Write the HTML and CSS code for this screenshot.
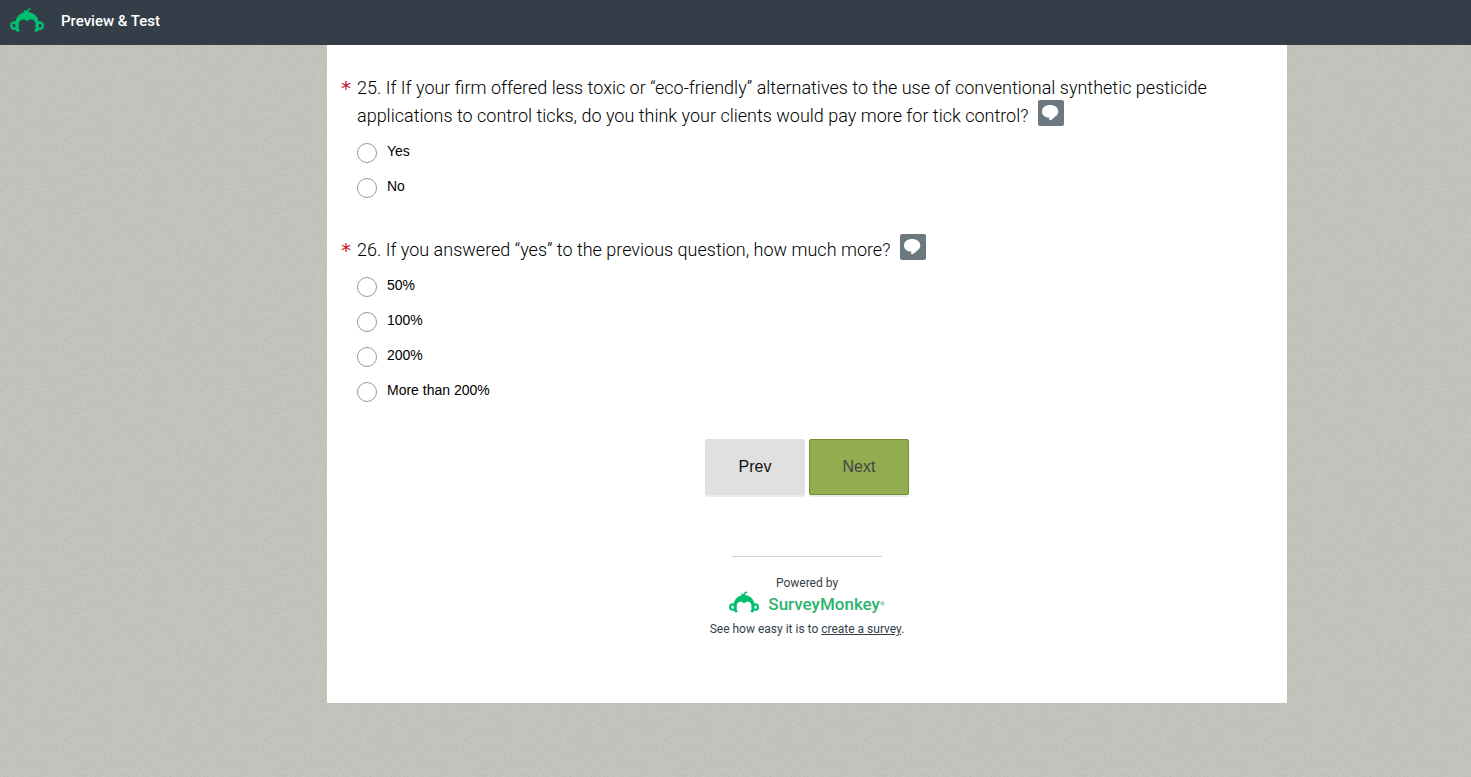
FILE: index.html
```html
<!DOCTYPE html>
<html lang="en">
<head>
  <meta charset="UTF-8">
  <meta name="viewport" content="width=device-width, initial-scale=1.0">
  <title>Preview &amp; Test</title>
  <link rel="stylesheet" href="styles.css">
</head>
<body>
  <svg class="symbols" aria-hidden="true">
    <symbol id="monkey" viewBox="0 0 34 24">
      <circle cx="4.4" cy="17.7" r="3.1" fill="none" stroke="#00bf6f" stroke-width="2.5"/>
      <circle cx="29.8" cy="17.7" r="3.1" fill="none" stroke="#00bf6f" stroke-width="2.5"/>
      <path fill="#00bf6f" d="M5.2 15 C6 8.4 10.8 4 17.1 4 S28.2 8.4 29 15 L28.6 21.4 C28.4 22.8 27.6 23.8 26.4 23.8 L24.2 23 C25.4 21.4 26 19.4 25.8 17.2 C25.5 13.6 23.6 11.6 21.3 11.6 C19.4 11.6 18 12.2 17.1 13.6 C16.2 12.2 14.8 11.6 12.9 11.6 C10.6 11.6 8.7 13.6 8.4 17.2 C8.2 19.4 8.8 21.4 10 23 L7.8 23.8 C6.6 23.8 5.8 22.8 5.6 21.4 Z"/>
      <path fill="none" stroke="#00bf6f" stroke-width="1.6" stroke-linecap="round" d="M16.9 5 C17 3 18 1.4 19.8 .9 M16.6 5 C16.2 3.8 15.4 3.2 14.4 3.1"/>
    </symbol>
    <symbol id="bubble" viewBox="0 0 26 26">
      <path fill="#fff" d="M12 5 C16.8 5 20.3 7.6 20.3 11.4 C20.3 13.6 19 15.6 17 16.8 C15.6 18.4 14.2 19.6 12.4 20.2 C11.4 20.5 11 20 11.2 19.2 L11.4 17.6 C7 17.4 4 15 4 11.4 C4 7.6 7.4 5 12 5 Z"/>
    </symbol>
  </svg>

  <header class="topbar">
    <svg class="topbar-logo" aria-hidden="true"><use href="#monkey"/></svg>
    <span>Preview &amp; Test</span>
  </header>

  <main class="survey">
    <form>
      <fieldset class="question">
        <legend>
          <span class="required">*</span>
          <span class="question-title">25. If If your firm offered less toxic or “eco-friendly” alternatives to the use of conventional synthetic pesticide applications to control ticks, do you think your clients would pay more for tick control?
            <button type="button" class="comment" aria-label="Comment"><svg aria-hidden="true"><use href="#bubble"/></svg></button></span>
        </legend>
        <div class="options">
          <label><input type="radio" name="q25"><span>Yes</span></label>
          <label><input type="radio" name="q25"><span>No</span></label>
        </div>
      </fieldset>

      <fieldset class="question">
        <legend>
          <span class="required">*</span>
          <span class="question-title">26. If you answered “yes” to the previous question, how much more?
            <button type="button" class="comment" aria-label="Comment"><svg aria-hidden="true"><use href="#bubble"/></svg></button></span>
        </legend>
        <div class="options">
          <label><input type="radio" name="q26"><span>50%</span></label>
          <label><input type="radio" name="q26"><span>100%</span></label>
          <label><input type="radio" name="q26"><span>200%</span></label>
          <label><input type="radio" name="q26"><span>More than 200%</span></label>
        </div>
      </fieldset>

      <div class="buttons">
        <button type="button" class="btn prev">Prev</button>
        <button type="submit" class="btn next">Next</button>
      </div>
    </form>

    <footer class="powered">
      <div>Powered by</div>
      <div class="brand">
        <svg aria-hidden="true"><use href="#monkey"/></svg>
        <span>SurveyMonkey</span><sup>®</sup>
      </div>
      <div>See how easy it is to <a href="#">create a survey</a>.</div>
    </footer>
  </main>
</body>
</html>
```
FILE: styles.css
```css
* {
  box-sizing: border-box;
}

body {
  margin: 0;
  min-height: 100vh;
  font-family: "Liberation Sans", Arial, sans-serif;
  color: #000;
  background-color: #c4c5be;
  /* fine paper grain */
  background-image: url("data:image/svg+xml,%3Csvg xmlns='http://www.w3.org/2000/svg' width='200' height='200'%3E%3Cfilter id='n' x='0' y='0' width='100%25' height='100%25' color-interpolation-filters='sRGB'%3E%3CfeTurbulence type='fractalNoise' baseFrequency='.7' numOctaves='2' stitchTiles='stitch'/%3E%3CfeColorMatrix values='0 0 0 0 .66 0 0 0 0 .67 0 0 0 0 .63 4 0 0 0 -1.8'/%3E%3C/filter%3E%3Crect width='200' height='200' filter='url(%23n)' opacity='.35'/%3E%3C/svg%3E");
}

.symbols {
  position: absolute;
  width: 0;
  height: 0;
}

/* Top bar */
.topbar {
  display: flex;
  align-items: flex-start;
  gap: 17px;
  height: 45px;
  padding: 8px 10px;
  background-color: #333e48;
  color: #fff;
  font-family: Roboto, sans-serif;
  font-size: 15px;
  font-weight: 500;
  line-height: 26px;
}

.topbar-logo {
  width: 34px;
  height: 24px;
}

/* Survey page */
.survey {
  max-width: 960px;
  margin: 0 184px 0 auto;
  padding: 29px 14px 66px;
  background-color: #fff;
}

.question {
  min-width: 0;
  margin: 0 0 38px;
  padding: 0;
  border: 0;
}

.question:last-of-type {
  margin-bottom: 37px;
}

legend {
  display: flex;
  padding: 0;
  font-family: Roboto, "Liberation Sans", sans-serif;
  font-size: 18px;
  font-weight: 300;
  line-height: 28px;
}

.required {
  flex: 0 0 16px;
  color: #c8102e;
  font-family: "DejaVu Sans", sans-serif;
  font-size: 20px;
  font-weight: 400;
}

.question-title {
  max-width: 880px;
}

.comment {
  width: 26px;
  height: 26px;
  margin: -2px 0 0 5px;
  padding: 0;
  border: 0;
  border-radius: 2px;
  background-color: #6b787f;
  vertical-align: -4px;
  cursor: pointer;
}

.comment svg {
  display: block;
  width: 26px;
  height: 26px;
}

.options {
  display: flex;
  flex-direction: column;
  align-items: flex-start;
  gap: 15px;
  padding: 13px 0 0 16px;
}

.options label {
  display: flex;
  gap: 10px;
  height: 20px;
  font-size: 14px;
  line-height: 16px;
}

.options input {
  appearance: none;
  width: 20px;
  height: 20px;
  margin: 0;
  border: 1px solid #999;
  border-radius: 50%;
  background-color: #fff;
}

.options input:checked {
  background-color: #8fac4f;
}

/* Buttons */
.buttons {
  display: flex;
  justify-content: center;
  gap: 4px;
}

.btn {
  width: 100px;
  height: 56px;
  padding: 0;
  border: 1px solid #e0e0e0;
  border-radius: 2px;
  background-color: #e0e0e0;
  box-shadow: 0 2px 0 #ebebeb;
  color: #111;
  font-family: inherit;
  font-size: 16px;
  cursor: pointer;
}

.next {
  border-color: #748f36;
  background-color: #92ad50;
  color: #444;
}

/* Footer */
.powered {
  display: flex;
  flex-direction: column;
  align-items: center;
  margin-top: 61px;
  color: #333e48;
  font-family: Roboto, sans-serif;
  font-size: 12px;
  line-height: 16px;
}

.powered::before {
  content: "";
  width: 150px;
  margin-bottom: 18px;
  border-top: 1px solid #d0d2d3;
}

.brand {
  display: flex;
  align-items: center;
  height: 26px;
  margin-bottom: 4px;
  color: #2db46f;
  font-size: 17px;
  font-weight: 500;
}

.brand svg {
  width: 30px;
  height: 22px;
  margin: 0 9px 4px 0;
}

.brand sup {
  font-size: 6px;
}

.powered a {
  color: inherit;
}
```
